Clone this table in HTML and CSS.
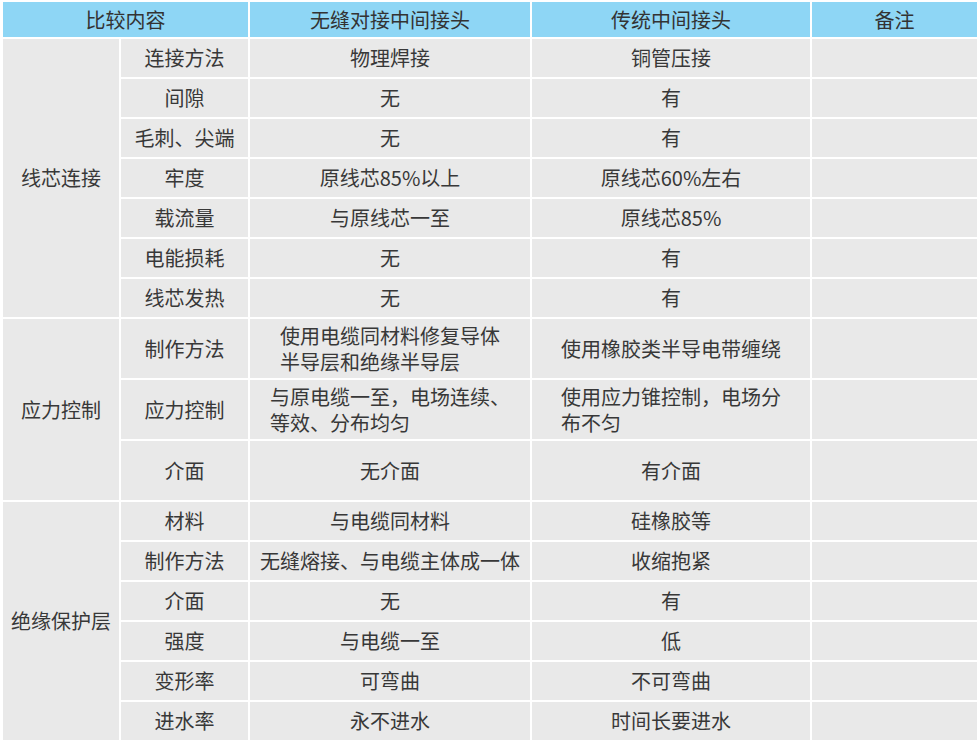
FILE: index.html
```html
<!DOCTYPE html>
<html lang="zh-CN">
<head>
<meta charset="utf-8">
<title>对比表</title>
<link rel="stylesheet" href="styles.css">
</head>
<body>
<table class="cmp">
  <colgroup>
    <col class="c1"><col class="c2"><col class="c3"><col class="c4"><col class="c5">
  </colgroup>
  <thead>
    <tr class="h">
      <th colspan="2" class="h-first">比较内容</th>
      <th>无缝对接中间接头</th>
      <th>传统中间接头</th>
      <th class="h-note">备注</th>
    </tr>
  </thead>
  <tbody>
    <tr class="r"><td rowspan="7">线芯连接</td><td>连接方法</td><td>物理焊接</td><td>铜管压接</td><td></td></tr>
    <tr class="r"><td>间隙</td><td>无</td><td>有</td><td></td></tr>
    <tr class="r"><td>毛刺、尖端</td><td>无</td><td>有</td><td></td></tr>
    <tr class="r"><td>牢度</td><td>原线芯85%以上</td><td>原线芯60%左右</td><td></td></tr>
    <tr class="r"><td>载流量</td><td>与原线芯一至</td><td>原线芯85%</td><td></td></tr>
    <tr class="r"><td>电能损耗</td><td>无</td><td>有</td><td></td></tr>
    <tr class="r"><td>线芯发热</td><td>无</td><td>有</td><td></td></tr>

    <tr class="t"><td rowspan="3">应力控制</td><td>制作方法</td><td><span class="ml">使用电缆同材料修复导体<br>半导层和绝缘半导层</span></td><td><span class="ml">使用橡胶类半导电带缠绕</span></td><td></td></tr>
    <tr class="t"><td>应力控制</td><td><span class="ml">与原电缆一至，电场连续、<br>等效、分布均匀</span></td><td><span class="ml">使用应力锥控制，电场分<br>布不匀</span></td><td></td></tr>
    <tr class="t"><td>介面</td><td>无介面</td><td>有介面</td><td></td></tr>

    <tr class="r"><td rowspan="6">绝缘保护层</td><td>材料</td><td>与电缆同材料</td><td>硅橡胶等</td><td></td></tr>
    <tr class="r"><td>制作方法</td><td>无缝熔接、与电缆主体成一体</td><td>收缩抱紧</td><td></td></tr>
    <tr class="r"><td>介面</td><td>无</td><td>有</td><td></td></tr>
    <tr class="r"><td>强度</td><td>与电缆一至</td><td>低</td><td></td></tr>
    <tr class="r"><td>变形率</td><td>可弯曲</td><td>不可弯曲</td><td></td></tr>
    <tr class="r"><td>进水率</td><td>永不进水</td><td>时间长要进水</td><td></td></tr>
  </tbody>
</table>
</body>
</html>
```

FILE: styles.css
```css
html, body {
  margin: 0;
  padding: 0;
  background: #ffffff;
}

body {
  font-family: "Noto Sans CJK SC", "Noto Sans", sans-serif;
  color: #383838;
}

.cmp {
  table-layout: fixed;
  border-collapse: separate;
  border-spacing: 2px;
  margin: 0 0 0 1px;
  width: 978px;
  font-size: 20px;
}

.c1 { width: 116px; }
.c2 { width: 127px; }
.c3 { width: 280px; }
.c4 { width: 278px; }
.c5 { width: 165px; }

.cmp th,
.cmp td {
  padding: 0;
  text-align: center;
  vertical-align: middle;
  font-weight: normal;
  line-height: 26px;
  white-space: nowrap;
}

.cmp th {
  background: #8ed6f5;
  color: #333333;
}

.cmp td {
  background: #e9e9e9;
}

.h { height: 35px; }
.r { height: 38px; }
.t { height: 59px; }

.h-first { padding-right: 16px; }
.h-note { padding-right: 43px; }

.ml {
  display: inline-block;
  text-align: left;
  line-height: 26px;
}
```
